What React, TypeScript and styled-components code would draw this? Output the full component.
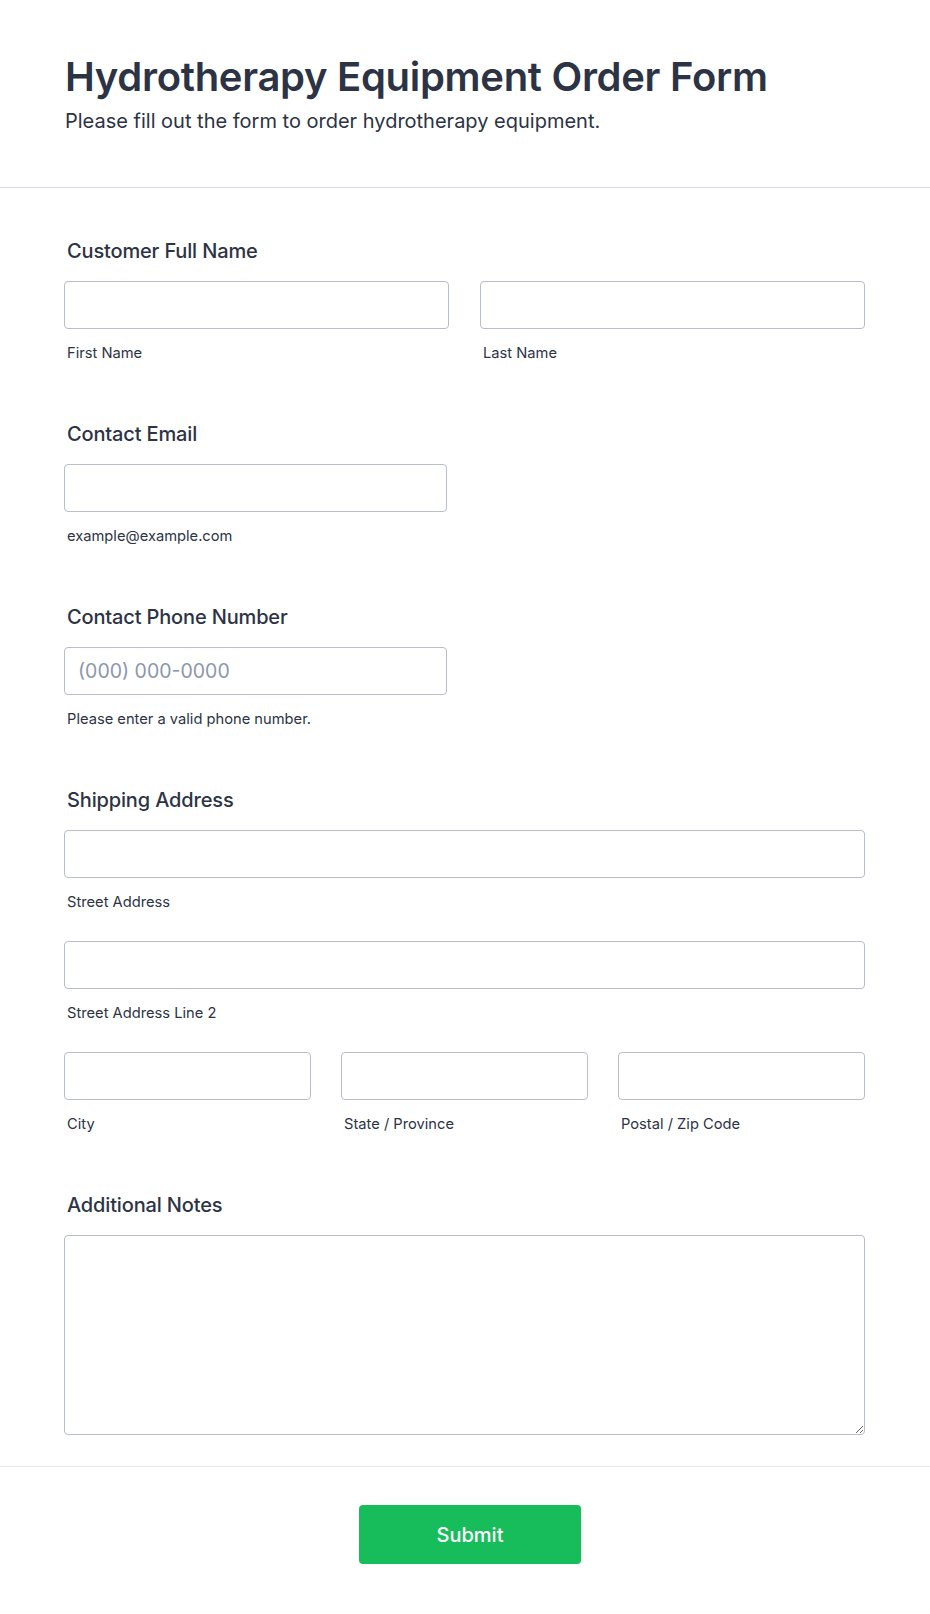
import React from "react";
import styled, { createGlobalStyle } from "styled-components";

const GlobalStyle = createGlobalStyle`
  * { box-sizing: border-box; }
  html, body { margin: 0; padding: 0; background: #ffffff; }
  body { font-family: Inter, "Noto Sans", "Liberation Sans", sans-serif; color: #2c3345; }
`;

const Page = styled.div`
  width: 930px;
  min-height: 1614px;
  background: #ffffff;
`;

const Header = styled.header`
  padding: 53px 65px 54px 65px;
  border-bottom: 1px solid #d6dbe3;
`;

const Title = styled.h1`
  margin: 0;
  font-size: 40px;
  line-height: 48px;
  font-weight: 600;
  color: #2c3345;
  letter-spacing: -0.3px;
`;

const Subtitle = styled.p`
  margin: 8px 0 0 0;
  font-size: 20px;
  line-height: 24px;
  font-weight: 400;
  color: #2c3345;
`;

const FormBody = styled.div`
  display: flex;
  flex-direction: column;
  gap: 60px;
  padding: 51px 65px 31px 64px;
`;

const Section = styled.section`
  display: flex;
  flex-direction: column;
`;

const Label = styled.label`
  display: block;
  padding-left: 3px;
  font-size: 20px;
  line-height: 24px;
  font-weight: 500;
  color: #2c3345;
  letter-spacing: -0.15px;
  margin-bottom: 18px;
`;

const Row = styled.div<{ $cols: number }>`
  display: grid;
  grid-template-columns: repeat(${(p) => p.$cols}, 1fr);
  column-gap: ${(p) => (p.$cols === 3 ? 30 : 31)}px;
`;

const Stack = styled.div`
  display: flex;
  flex-direction: column;
  gap: 30px;
`;

const Field = styled.div<{ $width?: number }>`
  display: flex;
  flex-direction: column;
  width: ${(p) => (p.$width ? `${p.$width}px` : "100%")};
`;

const Input = styled.input`
  display: block;
  width: 100%;
  height: 48px;
  padding: 0 13px;
  border: 1px solid #b8bdc9;
  border-radius: 4px;
  background: #ffffff;
  font-family: Inter, "Noto Sans", "Liberation Sans", sans-serif;
  font-size: 19.5px;
  color: #2c3345;
  outline: none;
  &::placeholder {
    color: #8b97ad;
    opacity: 1;
  }
`;

const TextArea = styled.textarea`
  display: block;
  width: 100%;
  height: 200px;
  padding: 12px 13px;
  border: 1px solid #b8bdc9;
  border-radius: 4px;
  background: #ffffff;
  font-family: Inter, "Noto Sans", "Liberation Sans", sans-serif;
  font-size: 16px;
  color: #2c3345;
  outline: none;
  resize: vertical;
`;

const SubLabel = styled.span`
  display: block;
  margin-top: 15px;
  padding-left: 3px;
  font-size: 14.7px;
  line-height: 18px;
  font-weight: 400;
  color: #2c3345;
`;

const Footer = styled.div`
  display: flex;
  justify-content: center;
  padding: 38px 0 50px 10px;
  border-top: 1px solid #e4e7ee;
`;

const SubmitButton = styled.button`
  width: 222px;
  height: 59px;
  border: none;
  border-radius: 4px;
  background: #18bd5b;
  color: #ffffff;
  font-family: Inter, "Noto Sans", "Liberation Sans", sans-serif;
  font-size: 20px;
  font-weight: 500;
  cursor: pointer;
`;

export default function App() {
  return (
    <Page>
      <GlobalStyle />
      <Header>
        <Title>Hydrotherapy Equipment Order Form</Title>
        <Subtitle>Please fill out the form to order hydrotherapy equipment.</Subtitle>
      </Header>
      <FormBody>
        <Section>
          <Label>Customer Full Name</Label>
          <Row $cols={2}>
            <Field>
              <Input type="text" />
              <SubLabel>First Name</SubLabel>
            </Field>
            <Field>
              <Input type="text" />
              <SubLabel>Last Name</SubLabel>
            </Field>
          </Row>
        </Section>

        <Section>
          <Label>Contact Email</Label>
          <Field $width={383}>
            <Input type="email" />
            <SubLabel>example@example.com</SubLabel>
          </Field>
        </Section>

        <Section>
          <Label>Contact Phone Number</Label>
          <Field $width={383}>
            <Input type="tel" placeholder="(000) 000-0000" />
            <SubLabel>Please enter a valid phone number.</SubLabel>
          </Field>
        </Section>

        <Section>
          <Label>Shipping Address</Label>
          <Stack>
            <Field>
              <Input type="text" />
              <SubLabel>Street Address</SubLabel>
            </Field>
            <Field>
              <Input type="text" />
              <SubLabel>Street Address Line 2</SubLabel>
            </Field>
            <Row $cols={3}>
              <Field>
                <Input type="text" />
                <SubLabel>City</SubLabel>
              </Field>
              <Field>
                <Input type="text" />
                <SubLabel>State / Province</SubLabel>
              </Field>
              <Field>
                <Input type="text" />
                <SubLabel>Postal / Zip Code</SubLabel>
              </Field>
            </Row>
          </Stack>
        </Section>

        <Section>
          <Label>Additional Notes</Label>
          <TextArea />
        </Section>
      </FormBody>
      <Footer>
        <SubmitButton type="button">Submit</SubmitButton>
      </Footer>
    </Page>
  );
}
